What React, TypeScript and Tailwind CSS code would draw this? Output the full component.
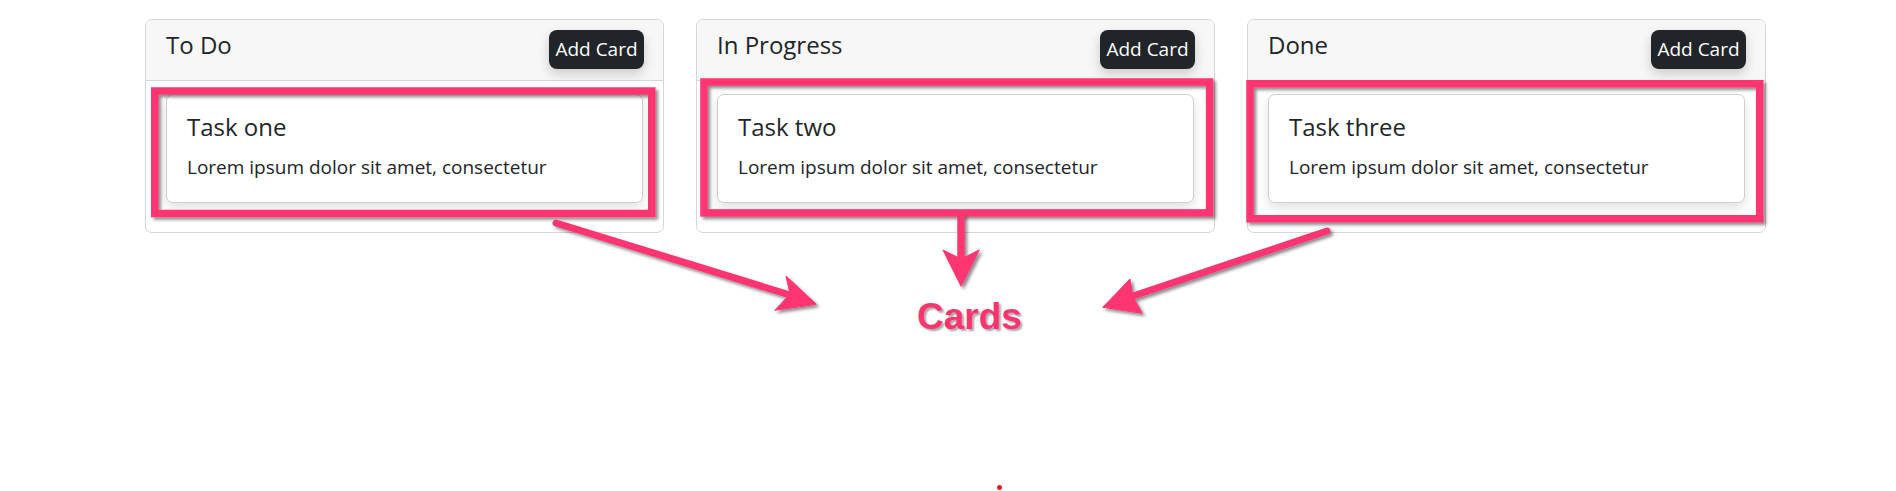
import React from "react";

const columns = [
  { title: "To Do", task: "Task one" },
  { title: "In Progress", task: "Task two" },
  { title: "Done", task: "Task three" },
];

function Annotations() {
  return (
    <svg
      className="absolute inset-0 pointer-events-none"
      width="1896"
      height="491"
      viewBox="0 0 1896 491"
      xmlns="http://www.w3.org/2000/svg"
    >
      <defs>
        <filter id="drop" x="-10%" y="-10%" width="130%" height="130%">
          <feDropShadow dx="2.5" dy="2.5" stdDeviation="1.4" floodColor="#000" floodOpacity="0.45" />
        </filter>
      </defs>
      <g filter="url(#drop)" fill="none" stroke="#fe3470">
        {/* highlight boxes */}
        <rect x="154.75" y="91" width="497" height="122.5" strokeWidth="7.5" />
        <rect x="704" y="82" width="505.6" height="130.9" strokeWidth="7.5" />
        <rect x="1250" y="83.75" width="509.7" height="135" strokeWidth="7.5" />
      </g>
      <g filter="url(#drop)" fill="#fe3470" stroke="#fe3470" strokeLinecap="round" strokeLinejoin="round">
        {/* left arrow */}
        <line x1="556" y1="223" x2="790" y2="295" strokeWidth="7" />
        <polygon points="816,304 786,276 790,294 775,310" strokeWidth="1" />
        {/* middle arrow */}
        <line x1="961" y1="214" x2="961" y2="262" strokeWidth="7.5" strokeLinecap="butt" />
        <polygon points="961,286 943,250 961,259 979,250" strokeWidth="1" />
        {/* right arrow */}
        <line x1="1327" y1="231" x2="1130" y2="297" strokeWidth="7" />
        <polygon points="1103,307 1130,279 1133,297 1142,313" strokeWidth="1" />
      </g>
    </svg>
  );
}

export default function App() {
  return (
    <div className="relative w-[1896px] h-[491px] overflow-hidden bg-white font-['Open_Sans','Noto_Sans',sans-serif] text-[#212529]">
      {/* Board */}
      <div className="flex gap-[32px] pl-[145px] pt-[19px]">
        {columns.map((col) => (
          <div key={col.title} className="w-[519px] overflow-hidden rounded-[7px] border border-[#d6d6d6] bg-white">
            {/* Column header */}
            <div className="flex items-start justify-between border-b border-[#d6d6d6] bg-[#f7f7f7] pl-[20px] pr-[19px] pt-[10px] pb-[11px]">
              <h5 className="text-[24px] font-medium leading-[30px]">{col.title}</h5>
              <button className="h-[39px] w-[95px] rounded-[8px] bg-[#212529] text-[19px] leading-none text-white shadow-[0_5px_12px_rgba(0,0,0,0.18)]">
                Add Card
              </button>
            </div>
            {/* Column body */}
            <div className="px-[20px] pt-[13px] pb-[29px]">
              <div className="rounded-[7px] border border-[#cfcfcf] bg-white px-[20px] pt-[17px] pb-[20px] shadow-[0_5px_12px_rgba(0,0,0,0.12)]">
                <h5 className="text-[24px] font-medium leading-[30px]">{col.task}</h5>
                <p className="mt-[11px] text-[19px] leading-[28.5px]">Lorem ipsum dolor sit amet, consectetur</p>
              </div>
            </div>
          </div>
        ))}
      </div>

      <Annotations />

      {/* Label */}
      <div className="absolute left-[917px] top-[298px] font-['Liberation_Sans',Arial,sans-serif] text-[37px] font-bold leading-none text-[#fe3470] [text-shadow:2px_2px_2px_rgba(0,0,0,0.35)]">
        Cards
      </div>

      {/* stray dot */}
      <div className="absolute left-[997px] top-[485px] h-[5px] w-[5px] rounded-full bg-[#ee1c25]" />
    </div>
  );
}
